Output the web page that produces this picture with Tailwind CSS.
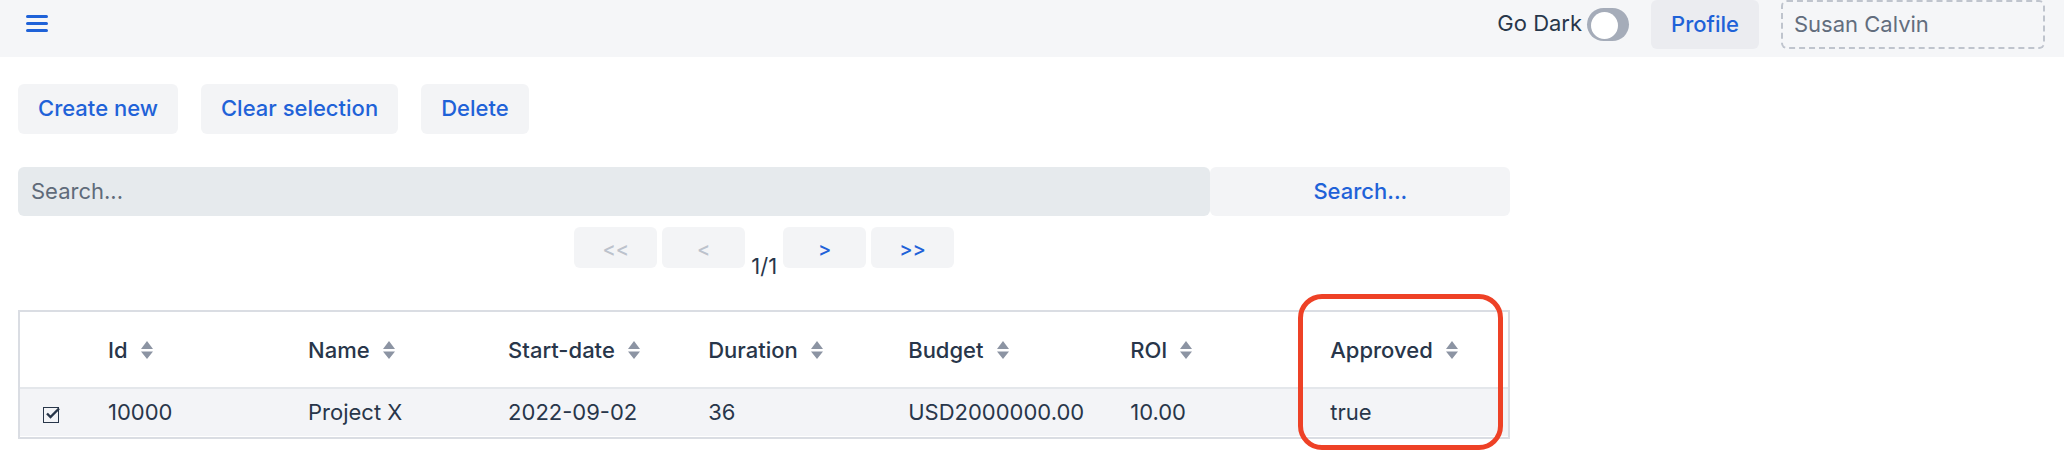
<!DOCTYPE html>
<html lang="en">
<head>
<meta charset="utf-8">
<meta name="viewport" content="width=device-width, initial-scale=1">
<title>Projects</title>
<script src="https://cdn.jsdelivr.net/npm/@tailwindcss/browser@4"></script>
</head>
<body class="min-h-screen bg-white font-[Inter,sans-serif] text-[22px] leading-7 text-[#28364a]">
<svg class="hidden" aria-hidden="true">
  <symbol id="sort" viewBox="0 0 12 18"><path d="M6 0L12 8H0zM0 10.5H12L6 18z" fill="currentColor"/></symbol>
</svg>

<header class="flex h-[57px] items-start justify-between bg-[#f5f6f8] pr-[19px]">
  <button type="button" aria-label="Menu" class="px-[26px] py-[14px] text-[#1f62d8]">
    <svg class="h-[18px] w-[22px]" viewBox="0 0 22 18" fill="none" stroke="currentColor" stroke-width="3" stroke-linecap="round"><path d="M1.5 2.5h19M1.5 9.5h19M1.5 16.5h19"/></svg>
  </button>
  <div class="flex items-start gap-[22px]">
    <label class="flex h-[49px] items-center gap-[5px]">
      <span class="pb-1">Go Dark</span>
      <input type="checkbox" role="switch" class="h-[33px] w-[42px] appearance-none rounded-full bg-[#a5acb9] before:mt-[4px] before:ml-1 before:block before:size-[27px] before:rounded-full before:bg-white">
    </label>
    <button type="button" class="h-[49px] rounded-md bg-[#ebecf0] px-5 pb-0.5 font-medium text-[#1f62d8]">Profile</button>
    <input type="text" aria-label="User" value="Susan Calvin" readonly class="h-[49px] w-[264px] rounded-md border-2 border-dashed border-[#bfc4cd] px-[11px] pb-0.5 text-[#626d7d]">
  </div>
</header>

<main class="w-[74%] pr-[17px] pb-9 pl-[18px] pt-[27px]">
  <div class="flex gap-[23px] font-medium text-[#1f62d8]">
    <button type="button" class="h-[50px] rounded-md bg-[#f3f4f6] px-5 pb-0.5">Create new</button>
    <button type="button" class="h-[50px] rounded-md bg-[#f3f4f6] px-5 pb-0.5">Clear selection</button>
    <button type="button" class="h-[50px] rounded-md bg-[#f3f4f6] px-5 pb-0.5">Delete</button>
  </div>

  <div class="mt-[33px] flex">
    <input type="text" aria-label="Search" placeholder="Search..." class="h-[49px] min-w-0 flex-1 rounded-md bg-[#e6eaed] px-[13px] pb-0.5 placeholder:text-[#5f6b7a]">
    <button type="button" class="h-[49px] w-[300px] rounded-md bg-[#f3f4f6] pb-0.5 font-medium text-[#1f62d8]">Search...</button>
  </div>

  <nav aria-label="Pages" class="mt-[11px] flex justify-center gap-[5px] text-[20px] font-medium text-[#1f62d8]">
    <button type="button" disabled class="h-[41px] w-[83px] rounded-md bg-[#f3f4f6] pt-0.5 text-[#bcc2cc]">&lt;&lt;</button>
    <button type="button" disabled class="h-[41px] w-[83px] rounded-md bg-[#f3f4f6] pt-0.5 text-[#bcc2cc]">&lt;</button>
    <span class="px-px pt-[25px] text-[22px] font-normal text-[#28364a]">1/1</span>
    <button type="button" class="h-[41px] w-[83px] rounded-md bg-[#f3f4f6] pt-0.5">&gt;</button>
    <button type="button" class="h-[41px] w-[83px] rounded-md bg-[#f3f4f6] pt-0.5">&gt;&gt;</button>
  </nav>

  <div class="relative mt-[30px] border-2 border-[#dadde3]">
    <table class="w-full table-fixed border-collapse text-left">
      <colgroup><col class="w-[66px]"><col><col><col><col><col class="w-[222px]"><col><col></colgroup>
      <thead>
        <tr class="h-[76px] border-b-2 border-[#e4e7eb]">
          <td></td>
          <th scope="col" class="px-[22px] font-medium"><button type="button" class="flex items-center gap-[13px]">Id<svg class="h-[18px] w-3 text-[#8c94a3]"><use href="#sort"/></svg></button></th>
          <th scope="col" class="px-[22px] font-medium"><button type="button" class="flex items-center gap-[13px]">Name<svg class="h-[18px] w-3 text-[#8c94a3]"><use href="#sort"/></svg></button></th>
          <th scope="col" class="px-[22px] font-medium"><button type="button" class="flex items-center gap-[13px]">Start-date<svg class="h-[18px] w-3 text-[#8c94a3]"><use href="#sort"/></svg></button></th>
          <th scope="col" class="px-[22px] font-medium"><button type="button" class="flex items-center gap-[13px]">Duration<svg class="h-[18px] w-3 text-[#8c94a3]"><use href="#sort"/></svg></button></th>
          <th scope="col" class="px-[22px] font-medium"><button type="button" class="flex items-center gap-[13px]">Budget<svg class="h-[18px] w-3 text-[#8c94a3]"><use href="#sort"/></svg></button></th>
          <th scope="col" class="px-[22px] font-medium"><button type="button" class="flex items-center gap-[13px]">ROI<svg class="h-[18px] w-3 text-[#8c94a3]"><use href="#sort"/></svg></button></th>
          <th scope="col" class="px-[22px] font-medium"><button type="button" class="flex items-center gap-[13px]">Approved<svg class="h-[18px] w-3 text-[#8c94a3]"><use href="#sort"/></svg></button></th>
        </tr>
      </thead>
      <tbody>
        <tr class="h-12 border-b border-white bg-[#f3f4f7]">
          <td>
            <label class="ml-[23px] grid size-[18px] pt-1">
              <input type="checkbox" checked aria-label="Select row 10000" class="peer col-start-1 row-start-1 size-4 appearance-none border border-[#28364a]">
              <svg class="pointer-events-none col-start-1 row-start-1 hidden h-4 w-[17px] peer-checked:block" viewBox="0 0 17 16" fill="none" stroke="#28364a" stroke-width="2.4"><path d="M4 6.5L7.5 10L16 1.5"/></svg>
            </label>
          </td>
          <td class="px-[22px]">10000</td>
          <td class="px-[22px]">Project X</td>
          <td class="px-[22px]">2022-09-02</td>
          <td class="px-[22px]">36</td>
          <td class="px-[22px]">USD2000000.00</td>
          <td class="px-[22px]">10.00</td>
          <td class="px-[22px]">true</td>
        </tr>
      </tbody>
    </table>
    <div class="pointer-events-none absolute -top-[18px] right-[5px] -bottom-[13px] w-[205px] rounded-[24px] border-5 border-[#ee4126]"></div>
  </div>
</main>
</body>
</html>
